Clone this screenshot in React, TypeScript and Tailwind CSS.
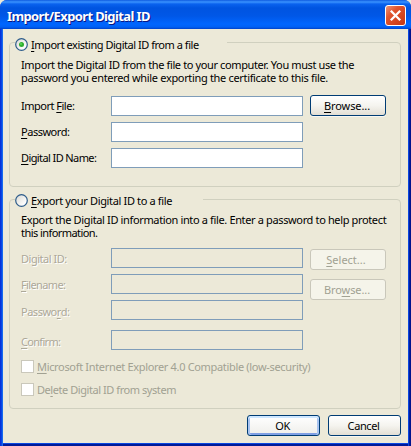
import type { ReactNode } from 'react';

function Radio({ checked }: { checked?: boolean }) {
  return (
    <svg width="13" height="13" viewBox="0 0 13 13" className="shrink-0">
      <defs>
        <linearGradient id="radioFace" x1="0" y1="0" x2="1" y2="1">
          <stop offset="0" stopColor="#d8d8d2" />
          <stop offset="0.8" stopColor="#ffffff" />
        </linearGradient>
      </defs>
      <circle cx="6.5" cy="6.5" r="5.8" fill="url(#radioFace)" stroke="#2d5c8a" strokeWidth="1.2" />
      {checked && <circle cx="6.5" cy="6.5" r="2.5" fill="#2fae2f" />}
      {checked && <circle cx="6" cy="6" r="1.1" fill="#55d551" />}
    </svg>
  );
}

function Row({ label, labelClass = '', disabled }: { label: ReactNode; labelClass?: string; disabled?: boolean }) {
  return (
    <div className="flex h-5">
      <div className={`w-[90px] shrink-0 ${disabled ? 'text-[#aca899] [text-shadow:1px_1px_0_#fff]' : ''} ${labelClass}`}>
        {label}
      </div>
      <div className={`h-5 w-48 border border-[#7f9db9] ${disabled ? '' : 'bg-white'}`} />
    </div>
  );
}

function Button({ children, kind = 'normal', size = 'w-[76px]' }: { children: ReactNode; kind?: 'normal' | 'default' | 'disabled'; size?: string }) {
  const look = {
    normal: 'border-[#003c74] bg-linear-to-b from-white via-[#f5f4ef] to-[#e3dfd5] shadow-[0_1px_0_#f8f7f2]',
    default: 'border-[#003c74] bg-linear-to-b from-white to-[#efeeea] shadow-[inset_0_2px_0_#cee7ff,inset_2px_0_0_#a9c4f0,inset_-2px_0_0_#a9c4f0,inset_0_-2px_0_#7f9fe4]',
    disabled: 'border-[#c9c7ba] bg-[#f5f4ea] text-[#a1a192]',
  }[kind];
  return (
    <button className={`flex h-[21px] shrink-0 justify-center rounded-[3px] border pt-[3px] leading-[13px] ${size} ${look}`}>
      {children}
    </button>
  );
}

function Check({ children }: { children: ReactNode }) {
  return (
    <div className="flex h-[13px] gap-[3px] text-[#a1a192]">
      <span className="size-[13px] shrink-0 border border-[#cac8bb] bg-white" />
      {children}
    </div>
  );
}

function K({ children }: { children: ReactNode }) {
  return <span className="underline decoration-1 underline-offset-2">{children}</span>;
}

export default function App() {
  return (
    <div className="h-[446px] w-[411px] overflow-hidden bg-[#ece9d8]">
      <div className="flex h-[446px] flex-col overflow-hidden rounded-t-[7px] bg-[linear-gradient(90deg,#0733d8_0_1px,#0845e5_1px_2px,#166aee_2px_3px,#0a47e0_3px_409px,#001ea0_409px_410px,#00138c_410px)] font-['Noto_Sans',sans-serif] text-[11px] leading-[13px] whitespace-nowrap text-black">
        <header className="flex h-[29px] shrink-0 items-start justify-between bg-[linear-gradient(#0f5be0_0,#3a93ff_2px,#0a62ee_4px,#0054e0_8px,#0057e7_16px,#0066ff_24px,#0061f5_27px,#0042c8_29px)] pr-[5px] pl-[7px]">
          <h1 className="pt-[7px] text-[13px] leading-[18px] font-bold tracking-[-0.62px] text-white [text-shadow:1px_1px_0_#0a1883]">
            Import/Export Digital ID
          </h1>
          <svg width="21" height="21" viewBox="0 0 21 21" className="mt-[5px]">
            <defs>
              <linearGradient id="closeFace" x1="0" y1="0" x2="1" y2="1">
                <stop offset="0" stopColor="#ee9a7e" />
                <stop offset="0.35" stopColor="#e0552f" />
                <stop offset="1" stopColor="#c63510" />
              </linearGradient>
            </defs>
            <rect x="0.5" y="0.5" width="20" height="20" rx="2.5" fill="url(#closeFace)" stroke="#fff" />
            <path d="M5.8 5.8 15.2 15.2M15.2 5.8 5.8 15.2" stroke="#fff" strokeWidth="2.3" />
          </svg>
        </header>
        <main className="mx-[3px] mb-[3px] flex-1 bg-[#ece9d8] pt-[5px] pr-[7px] pl-[6px] shadow-[0_1px_0_#0a47e0,0_3px_0_#001a98]">
          <fieldset className="h-[153px] w-[392px] min-w-0 rounded-[4px] border border-[#d0d0bf]">
            <legend className="ml-[5px] flex h-[17px] w-[212px] gap-[3px] pt-1">
              <Radio checked />
              <span className="tracking-[-0.47px]"><K>I</K>mport existing Digital ID from a file</span>
            </legend>
            <div className="mt-[7px] ml-[11px]">
              <p className="tracking-[-0.38px]">Import the Digital ID from the file to your computer. You must use the</p>
              <p className="tracking-[-0.33px]">password you entered while exporting the certificate to this file.</p>
            </div>
            <div className="mt-3 ml-[11px] flex gap-[7px]">
              <div className="flex flex-col gap-[6px]">
                <Row labelClass="pt-[3px] tracking-[-0.5px]" label={<>Import <K>F</K>ile:</>} />
                <Row labelClass="pt-[3px] tracking-[-0.48px]" label={<><K>P</K>assword:</>} />
                <Row labelClass="pt-[3px] tracking-[-0.6px]" label={<><K>D</K>igital ID Name:</>} />
              </div>
              <div className="-mt-px">
                <Button><span className="pr-0.5 tracking-[-0.1px]"><K>B</K>rowse...</span></Button>
              </div>
            </div>
          </fieldset>

          <fieldset className="mt-1 h-[218px] w-[392px] min-w-0 rounded-[4px] border border-[#d0d0bf]">
            <legend className="ml-[5px] flex h-[17px] w-[188px] gap-[3px] pt-[3px]">
              <Radio />
              <span className="tracking-[-0.35px]"><K>E</K>xport your Digital ID to a file</span>
            </legend>
            <div className="mt-[5px] ml-[11px]">
              <p className="tracking-[-0.36px]">Export the Digital ID information into a file. Enter a password to help protect</p>
              <p className="tracking-[-0.56px]">this information.</p>
            </div>
            <div className="mt-[9px] ml-[11px] flex gap-[7px]">
              <div className="flex flex-col gap-[6px]">
                <Row disabled labelClass="pt-1 tracking-[-0.48px]" label="Digital ID:" />
                <Row disabled labelClass="pt-1 tracking-[-0.62px]" label={<><K>F</K>ilename:</>} />
                <Row disabled labelClass="pt-[5px] tracking-[-0.48px]" label={<>Passwo<K>r</K>d:</>} />
                <div className="pt-1">
                  <Row disabled labelClass="pt-[5px] tracking-[-0.7px]" label={<><K>C</K>onfirm:</>} />
                </div>
              </div>
              <div className="mt-px flex flex-col gap-[9px]">
                <Button kind="disabled"><span className="pr-1"><K>S</K>elect...</span></Button>
                <Button kind="disabled"><span className="pr-0.5 tracking-[-0.1px]">Bro<K>w</K>se...</span></Button>
              </div>
            </div>
            <div className="mt-[10px] ml-[11px] flex flex-col gap-[10px]">
              <Check><span className="tracking-[-0.33px]"><K>M</K>icrosoft Internet Explorer 4.0 Compatible (low-security)</span></Check>
              <Check><span className="tracking-[-0.44px]">De<K>l</K>ete Digital ID from system</span></Check>
            </div>
          </fieldset>

          <div className="mt-[6px] flex justify-end gap-2">
            <Button kind="default" size="w-[73px]"><span className="pr-0.5 tracking-[-0.5px]">OK</span></Button>
            <Button size="w-[73px]"><span className="pr-0.5 tracking-[-0.4px]">Cancel</span></Button>
          </div>
        </main>
      </div>
    </div>
  );
}
